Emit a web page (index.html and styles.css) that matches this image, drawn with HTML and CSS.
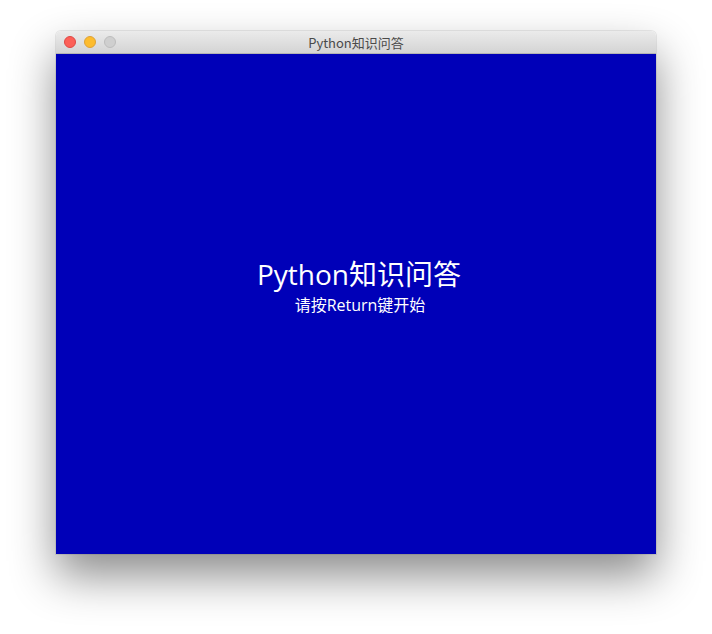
FILE: index.html
```html
<!DOCTYPE html>
<html>
<head>
<meta charset="utf-8">
<link rel="stylesheet" href="styles.css">
</head>
<body>
<div class="window">
  <div class="titlebar">
    <div class="lights">
      <span class="light red"></span>
      <span class="light yellow"></span>
      <span class="light gray"></span>
    </div>
    <div class="wtitle">Python知识问答</div>
  </div>
  <div class="content">
    <div class="title">Python知识问答</div>
    <div class="sub">请按Return键开始</div>
  </div>
</div>
</body>
</html>
```
FILE: styles.css
```css
html, body {
  margin: 0;
  padding: 0;
  background: #ffffff;
  width: 712px;
  height: 634px;
  overflow: hidden;
}
body {
  padding: 31px 0 0 56px;
  box-sizing: border-box;
  font-family: "Noto Sans CJK SC", "Noto Sans", sans-serif;
}
.window {
  width: 600px;
  border-radius: 5px 5px 0 0;
  box-shadow: 0 22px 45px rgba(0,0,0,0.45), 0 0 0 1px rgba(0,0,0,0.08);
}
.titlebar {
  height: 23px;
  box-sizing: border-box;
  border-radius: 5px 5px 0 0;
  background: linear-gradient(#ebebeb, #d4d4d4);
  border-bottom: 1px solid #b4b4b4;
  display: flex;
  align-items: center;
  position: relative;
}
.lights {
  display: flex;
  gap: 8px;
  padding-left: 8px;
}
.light {
  width: 12px;
  height: 12px;
  border-radius: 50%;
  box-sizing: border-box;
}
.red { background: #fc5f57; border: 1px solid #df4744; }
.yellow { background: #fdbc2e; border: 1px solid #dea236; }
.gray { background: #cfcfcf; border: 1px solid #bdbdbd; }
.wtitle {
  position: absolute;
  left: 0;
  right: 0;
  top: 0;
  text-align: center;
  font-size: 13px;
  line-height: 23px;
  color: #4a4a4a;
}
.content {
  height: 500px;
  background: #0000b8;
  display: flex;
  flex-direction: column;
  align-items: center;
  padding-top: 200px;
  padding-left: 6px;
  box-sizing: border-box;
  color: #ffffff;
  font-family: "Open Sans", "Noto Sans CJK SC", sans-serif;
}
.title {
  font-size: 28px;
  line-height: 40px;
}
.sub {
  font-size: 16px;
  line-height: 20px;
  margin-top: 1px;
  padding-left: 2px;
}
```
